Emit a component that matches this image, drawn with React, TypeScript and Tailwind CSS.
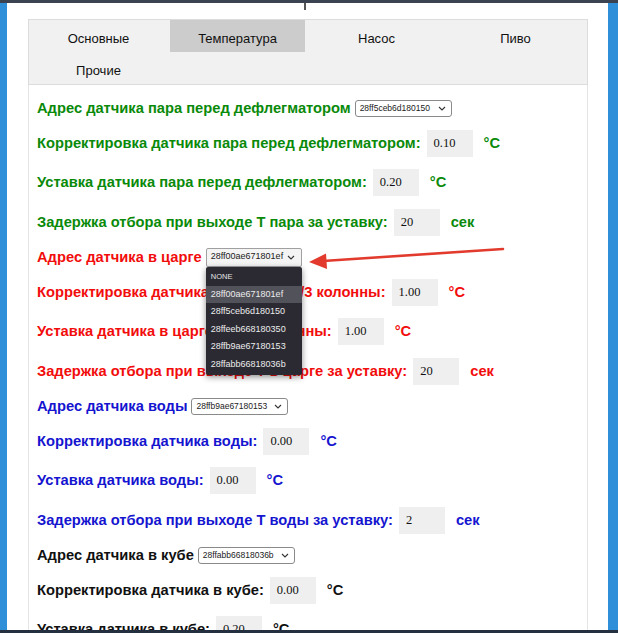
import React from 'react';

type Row =
  | { kind: 'select'; label: string; value: string; color: string }
  | { kind: 'input'; label: string; value: string; unit: string; color: string };

const GREEN = 'text-[#0a8a0a]';
const RED = 'text-[#f20d0d]';
const BLUE = 'text-[#1515d0]';
const BLACK = 'text-[#111111]';

const ROWS: Row[] = [
  { kind: 'select', label: 'Адрес датчика пара перед дефлегматором', value: '28ff5ceb6d180150', color: GREEN },
  { kind: 'input', label: 'Корректировка датчика пара перед дефлегматором:', value: '0.10', unit: '°С', color: GREEN },
  { kind: 'input', label: 'Уставка датчика пара перед дефлегматором:', value: '0.20', unit: '°С', color: GREEN },
  { kind: 'input', label: 'Задержка отбора при выходе Т пара за уставку:', value: '20', unit: 'сек', color: GREEN },
  { kind: 'select', label: 'Адрес датчика в царге', value: '28ff00ae671801ef', color: RED },
  { kind: 'input', label: 'Корректировка датчика в царге на 2/3 колонны:', value: '1.00', unit: '°С', color: RED },
  { kind: 'input', label: 'Уставка датчика в царге на 2/3 колонны:', value: '1.00', unit: '°С', color: RED },
  { kind: 'input', label: 'Задержка отбора при выходе Т в царге за уставку:', value: '20', unit: 'сек', color: RED },
  { kind: 'select', label: 'Адрес датчика воды', value: '28ffb9ae67180153', color: BLUE },
  { kind: 'input', label: 'Корректировка датчика воды:', value: '0.00', unit: '°С', color: BLUE },
  { kind: 'input', label: 'Уставка датчика воды:', value: '0.00', unit: '°С', color: BLUE },
  { kind: 'input', label: 'Задержка отбора при выходе Т воды за уставку:', value: '2', unit: 'сек', color: BLUE },
  { kind: 'select', label: 'Адрес датчика в кубе', value: '28ffabb66818036b', color: BLACK },
  { kind: 'input', label: 'Корректировка датчика в кубе:', value: '0.00', unit: '°С', color: BLACK },
  { kind: 'input', label: 'Уставка датчика в кубе:', value: '0.20', unit: '°С', color: BLACK },
];

const OPTIONS = ['28ff00ae671801ef', '28ff5ceb6d180150', '28ffeeb668180350', '28ffb9ae67180153', '28ffabb66818036b'];

const TABS = ['Основные', 'Температура', 'Насос', 'Пиво', 'Прочие'];

const Chevron = () => (
  <svg width="8" height="5" viewBox="0 0 8 5" className="shrink-0">
    <path d="M1 1l3 3 3-3" fill="none" stroke="#333" strokeWidth="1.1" />
  </svg>
);

const Dropdown = () => (
  <div className="absolute left-0 top-[19px] z-10 w-[96px] rounded-[2px] bg-[#2b2a33] py-[2px] shadow-[0_2px_6px_rgba(0,0,0,0.45)]">
    <div className="flex h-[17px] items-center px-[5px] text-[7.5px] text-[#e6e6e6]">NONE</div>
    {OPTIONS.map((o, i) => (
      <div
        key={o}
        className={`flex h-[17.6px] items-center px-[5px] text-[9px] text-[#ececec] ${i === 0 ? 'bg-[#52525a]' : ''}`}
      >
        {o}
      </div>
    ))}
  </div>
);

const SensorRow = ({ row, open }: { row: Row; open?: boolean }) => {
  if (row.kind === 'select') {
    return (
      <div className={`flex h-[18px] items-center ${row.color}`}>
        <span className="font-bold">{row.label}</span>
        <div className="relative ml-[4px]">
          {open ? (
            <div className="flex h-[19px] w-[96px] items-center justify-between rounded-[2px] border border-[#a0a0a0] bg-[#f4f4f4] pl-[4px] pr-[6px] text-[9px] font-normal text-[#222]">
              <span>{row.value}</span>
              <Chevron />
            </div>
          ) : (
            <div className="flex h-[17px] w-[97px] items-center justify-between rounded-[3px] border border-[#8a8a8a] bg-white pl-[4px] pr-[5px] text-[8.5px] font-normal text-[#222]">
              <span>{row.value}</span>
              <Chevron />
            </div>
          )}
          {open && <Dropdown />}
        </div>
      </div>
    );
  }
  return (
    <div className={`flex h-[27px] items-center ${row.color}`}>
      <span className="font-bold">{row.label}</span>
      <div className="ml-[6px] flex h-[27px] w-[46px] items-center bg-[#efefef] pl-[7px] font-['Liberation_Serif',serif] text-[12.5px] font-normal text-[#111]">
        {row.value}
      </div>
      <span className="ml-[11px] font-bold">{row.unit}</span>
    </div>
  );
};

export default function App() {
  return (
    <div className="flex h-[633px] w-[618px] flex-col overflow-hidden bg-white font-['Liberation_Sans',Arial,sans-serif]">
      <div className="h-[3px] shrink-0 bg-[#3b4250]" />
      <div className="flex min-h-0 flex-1">
        <div className="w-[7px] shrink-0 bg-[#2f8fd8]" />
        <div className="relative min-w-0 flex-1 overflow-hidden">
          <div className="absolute left-[297px] top-0 h-[7px] w-[2px] bg-[#555]" />
          <div className="ml-[21px] mt-[16px] w-[560px]">
            {/* Tabs */}
            <div className="flex flex-wrap border border-[#dcdcdc] bg-[#f1f1f1] text-[13px] text-[#111]">
              {TABS.map((t) => (
                <div key={t} className="flex w-[139px] justify-center px-[2px]">
                  <div
                    className={`flex h-[32px] w-full items-center justify-center pt-[6px] ${t === 'Температура' ? 'bg-[#cccccc]' : ''}`}
                  >
                    {t}
                  </div>
                </div>
              ))}
            </div>

            {/* Content */}
            <div className="flex flex-col gap-[12.5px] border-x border-[#e4e4e4] pl-[8px] pt-[14px] text-[14.7px]">
              {ROWS.map((r, i) => (
                <SensorRow key={i} row={r} open={i === 4} />
              ))}
            </div>
          </div>

          {/* annotation arrow */}
          <svg className="pointer-events-none absolute left-0 top-0" width="611" height="630">
            <line x1="496" y1="246" x2="316" y2="258" stroke="#e23b2e" strokeWidth="2.6" strokeLinecap="round" />
            <path d="M302 259 L319 250.5 L320 266 Z" fill="#e23b2e" />
          </svg>
        </div>
        <div className="w-[10px] shrink-0 bg-[#2f8fd8]" />
      </div>
      <div className="h-[3px] shrink-0 bg-[#243040]" />
    </div>
  );
}
